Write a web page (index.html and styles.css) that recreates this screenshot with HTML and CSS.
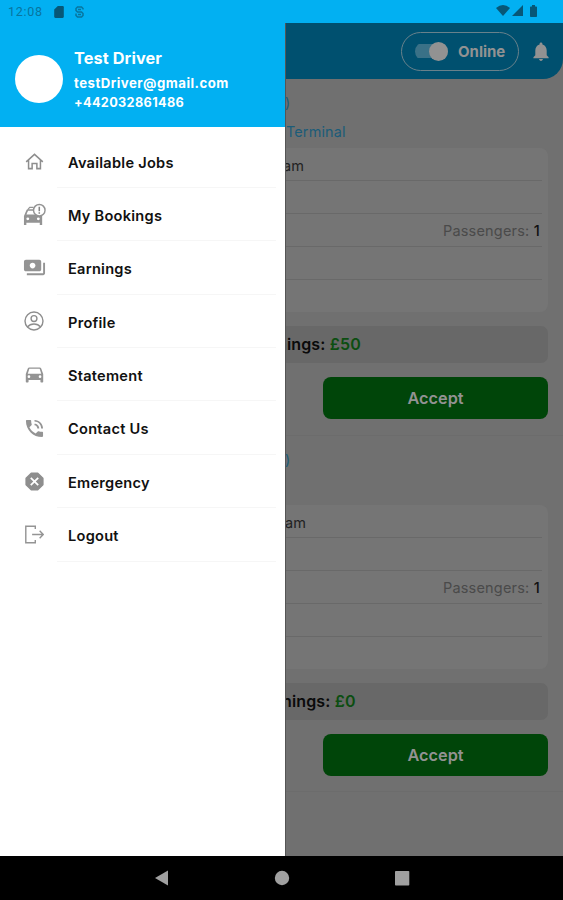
FILE: index.html
```html
<!DOCTYPE html>
<html lang="en">
<head>
<meta charset="utf-8">
<title>Driver menu</title>
<link rel="stylesheet" href="styles.css">
</head>
<body>
<div class="screen">
  <div class="status">
    <span class="time">12:08</span>
    <svg class="sd" viewBox="4 2 16 20"><path fill="#075777" d="M18 2h-8L4 8v12c0 1.100.9 2 2 2h12c1.100 0 2-.9 2-2V4c0-1.100-.9-2-2-2z"/></svg>
    <svg class="sync" viewBox="0 0 9 12" fill="none" stroke="#08759f" stroke-width="1.500"><path d="M8 3.500V2.500L6.500 1h-4L1 2.500v2L2.500 6h4L8 7.500v2L6.500 11h-4L1 9.500V7.500M3 3.500h3M3 8.500h3"/></svg>
    <span class="fill"></span>
    <svg class="wifi" viewBox="0 0 14 11"><path fill="#075777" d="M0 3Q7-3 14 3L7 11z"/></svg>
    <svg class="signal" viewBox="0 0 11 11"><path fill="#075777" d="M11 0v11H0z"/></svg>
    <svg class="battery" viewBox="0 0 7 12"><path fill="#075777" d="M2 0h3v1.500h1.200q.8 0 .8.800v8.900q0 .8-.8.800H.8q-.8 0-.8-.8V2.300q0-.8.800-.8H2z"/></svg>
  </div>
  <div class="main">
    <aside class="drawer">
      <header class="profile">
        <div class="avatar"></div>
        <div class="who">
          <div class="name">Test Driver</div>
          <div class="mail">testDriver@gmail.com</div>
          <div class="phone">+442032861486</div>
        </div>
      </header>
      <nav class="menu">
        <div class="item"><svg class="ic" viewBox="0 0 24 24" fill="none" stroke="#8e8e8e" stroke-width="1.900"><path d="M1.500 12.500L12 3l10.500 9.500M4.500 10v11H9v-6.500h6V21h4.500V10"/></svg><span class="label">Available Jobs</span></div>
        <div class="item"><svg class="ic big" viewBox="0 0 24 24"><path fill="#949494" fill-rule="evenodd" d="M1 13.500L3.300 8Q3.800 6.500 5.300 6.500H11V8H5.300L3.600 12H13q2 1.500 5 1.200h2V23h-2.500v-2.500h-14V23H1zM5 15a1.500 1.500 0 100 3 1.500 1.500 0 000-3zm11 0a1.500 1.500 0 100 3 1.500 1.500 0 000-3z"/><path fill="none" stroke="#949494" stroke-width="1.200" d="M5 7l2-2.500h4"/><path fill="#fff" d="M5.500 8.500H10l2 3H4.300z"/><circle cx="17" cy="7.500" r="6" fill="#fff" stroke="#949494" stroke-width="1.500"/><path stroke="#858585" stroke-width="1.600" d="M17 4v4.500M17 9.700v1.500"/></svg><span class="label">My Bookings</span></div>
        <div class="item"><svg class="ic big" viewBox="0 0 24 24"><path fill="#949494" d="M19 14V6c0-1.100-.9-2-2-2H3c-1.100 0-2 .9-2 2v8c0 1.100.9 2 2 2h14c1.100 0 2-.9 2-2zm-9-1c-1.660 0-3-1.340-3-3s1.340-3 3-3 3 1.340 3 3-1.340 3-3 3zm13-6v11c0 1.100-.9 2-2 2H4v-2h17V7h2z"/></svg><span class="label">Earnings</span></div>
        <div class="item"><svg class="ic round" viewBox="0 0 24 24" fill="none" stroke="#8e8e8e" stroke-width="1.700"><circle cx="12" cy="12" r="10.800"/><circle cx="12" cy="9" r="3.500"/><path d="M4 19.300Q7 15.500 12 15.500T20 19.300"/></svg><span class="label">Profile</span></div>
        <div class="item"><svg class="ic" viewBox="0 0 24 24"><path fill="#949494" fill-rule="evenodd" d="M20.500 4.500Q20 3 18.500 3h-13Q4 3 3.500 4.500L1 11.500V21q0 1 1 1h1.500q1 0 1-1v-2h15v2q0 1 1 1H22q1 0 1-1v-9.500zM5.500 4.600h13l2 6.400h-17zM5 13a1.700 1.700 0 110 3.400A1.700 1.700 0 015 13zm14 0a1.700 1.700 0 110 3.400 1.700 1.700 0 010-3.400z"/></svg><span class="label">Statement</span></div>
        <div class="item"><svg class="ic" viewBox="2 2 20 20"><path fill="#949494" d="M20 15.500c-1.250 0-2.450-.2-3.570-.57-.35-.11-.74-.03-1.020.24l-2.200 2.200c-2.830-1.440-5.150-3.750-6.590-6.590l2.200-2.200c.28-.28.36-.67.25-1.020C8.700 6.450 8.500 5.250 8.500 4c0-.55-.45-1-1-1H4c-.55 0-1 .45-1 1 0 9.390 7.610 17 17 17 .55 0 1-.45 1-1v-3.500c0-.55-.45-1-1-1zM19 12h2c0-4.970-4.030-9-9-9v1.500c4.140 0 7 3.400 7 7.500zm-4 0h2c0-2.760-2.240-5-5-5v1.500c1.660 0 3 1.840 3 3.500z"/></svg><span class="label">Contact Us</span></div>
        <div class="item"><svg class="ic" viewBox="0 0 24 24"><path fill="#8e8e8e" stroke="#8e8e8e" stroke-linejoin="round" stroke-width="2" d="M8 1.500h8L22.500 8v8L16 22.500H8L1.500 16V8z"/><path stroke="#fff" stroke-width="2.200" d="M7.300 7.300l9.400 9.400M16.700 7.300l-9.400 9.400"/></svg><span class="label">Emergency</span></div>
        <div class="item"><svg class="ic" viewBox="0 0 24 24" fill="none" stroke="#949494" stroke-width="1.800"><path d="M13 5V1.500H1v21h12V19M9 12h14M18.500 7.300L23 12l-4.500 4.700"/></svg><span class="label">Logout</span></div>
      </nav>
    </aside>
    <section class="page">
      <div class="topbar">
        <div class="online"><span class="track"><span class="knob"></span></span><span>Online</span></div>
        <svg class="bell" viewBox="4 2 16 20"><path fill="#929292" d="M12 22c1.100 0 2-.9 2-2h-4c0 1.100.89 2 2 2zm6-6v-5c0-3.070-1.640-5.640-4.500-6.320V4c0-.83-.67-1.500-1.500-1.500s-1.500.67-1.500 1.500v.68C7.630 5.360 6 7.920 6 11v5l-2 2v1h16v-1l-2-2z"/></svg>
      </div>
      <article class="job">
        <div class="route"><div class="paren">)</div><div class="term">Terminal</div></div>
        <div class="card">
          <div class="row"><span class="am">am</span></div>
          <div class="row"></div>
          <div class="row pax">Passengers: <b>1</b></div>
          <div class="row"></div>
          <div class="row"></div>
        </div>
        <div class="earn"><span class="sum">nings: <b>£50</b></span></div>
        <div class="accept">Accept</div>
      </article>
      <article class="job">
        <div class="route"><div class="paren">)</div></div>
        <div class="card">
          <div class="row"><span class="am second">am</span></div>
          <div class="row"></div>
          <div class="row pax">Passengers: <b>1</b></div>
          <div class="row"></div>
          <div class="row"></div>
        </div>
        <div class="earn"><span class="sum second">nings: <b>£0</b></span></div>
        <div class="accept">Accept</div>
      </article>
    </section>
  </div>
  <div class="navbar">
    <svg viewBox="0 0 16 16"><path fill="#a0a0a0" d="M1 8L14 .5v15z"/></svg>
    <svg viewBox="0 0 16 16"><circle cx="8" cy="8" r="7.200" fill="#a0a0a0"/></svg>
    <svg viewBox="0 0 16 16"><rect x="1" y="1" width="14.300" height="14.500" rx=".8" fill="#a0a0a0"/></svg>
  </div>
</div>
</body>
</html>
```
FILE: styles.css
```css
* { box-sizing: border-box; }
body { margin: 0; font-family: Inter, "Liberation Sans", sans-serif; }
svg { display: block; flex: none; }
.screen { width: 563px; height: 900px; display: flex; flex-direction: column; overflow: hidden; background: #000; }

.status { height: 23px; flex: none; display: flex; align-items: center; padding: 0 26px 0 8px; background: #02b0f2; }
.time { width: 46px; font: 12.5px/23px Roboto, sans-serif; letter-spacing: .7px; color: #08759f; }
.sd { width: 10px; height: 12px; }
.sync { width: 9px; height: 12px; margin-left: 11px; }
.fill { flex: 1; }
.wifi { width: 14px; height: 11px; }
.signal { width: 11px; height: 11px; margin-left: 2px; }
.battery { width: 7px; height: 12px; margin-left: 7px; }
.wifi, .signal, .battery { margin-top: -2px; }

.main { height: 833px; flex: none; display: flex; }
.drawer { width: 285px; flex: none; background: #fff; }
.profile { height: 104px; display: flex; padding: 0 15px; background: #02b0f2; color: #fff; font-weight: 700; }
.avatar { width: 48px; height: 48px; margin-top: 32px; border-radius: 50%; background: #fff; }
.who { margin: 24px 0 0 11px; white-space: nowrap; }
.name { font-size: 16.3px; line-height: 22px; font-weight: 700; letter-spacing: .1px; }
.mail { font-size: 13.2px; line-height: 19px; margin-top: 5px; letter-spacing: .48px; }
.phone { font-size: 12.7px; line-height: 20px; letter-spacing: .35px; }
.menu { padding-top: 7.500px; }
.item { height: 53.400px; display: grid; grid-template-columns: 57px 1fr; align-items: center; padding-right: 9px; }
.ic { width: 19px; height: 19px; margin: 0 0 0 24.500px; }
.ic.round { width: 20px; height: 20px; margin-left: 24px; }
.ic.big { width: 23px; height: 23px; margin-left: 22.500px; }
.label { height: 53.400px; border-bottom: 1px solid #f6f6f6; padding-left: 11px; font-size: 14.600px; line-height: 57px; font-weight: 600; letter-spacing: .25px; color: #111; }

.page { flex: 1; min-width: 0; overflow: hidden; background: #707070; border-left: 1px solid #555; }
.topbar { height: 56px; display: flex; align-items: center; justify-content: flex-end; padding-right: 14px; background: #00506f; border-bottom-right-radius: 20px; }
.online { width: 118px; height: 39px; border: 1.500px solid #68818b; border-radius: 20px; display: flex; align-items: center; padding-left: 13px; font-size: 15px; font-weight: 700; color: #929292; }
.track { width: 33px; height: 19px; display: flex; align-items: center; justify-content: flex-end; margin-right: 10px; background: linear-gradient(#3a7187, #3a7187) center / 100% 14px no-repeat; border-radius: 10px; }
.knob { width: 19px; height: 19px; border-radius: 50%; background: #929292; }
.bell { width: 16px; height: 19px; margin-left: 14px; }

.job { height: 356.500px; padding: 0 15px 0 0; border-bottom: 1px solid #6c6c6c; }
.route { height: 69px; padding-top: 14px; font-size: 14.400px; line-height: 20px; color: #1b5c79; }
.paren { margin-left: -1px; }
.term { margin-top: 9px; letter-spacing: .15px; }
.card { height: 164px; padding: 0 6px 0 0; background: #757575; border-radius: 0 8px 8px 0; }
.row { height: 33px; border-bottom: 1px solid #696969; font-size: 14.500px; line-height: 35px; color: #222; }
.row:last-child { border: 0; height: 32px; }
.am { margin-left: -3px; }
.am.second { margin-left: -1px; }
.pax { text-align: right; color: #4a4a4a; padding-right: 2px; letter-spacing: .2px; line-height: 34px; }
.pax b { font-weight: 500; color: #111; }
.earn { height: 37px; margin-top: 14px; background: #686868; border-radius: 0 7px 7px 0; font-size: 16px; line-height: 37px; font-weight: 600; color: #0a0a0a; }
.sum { margin-left: -9px; letter-spacing: .15px; }
.sum.second { margin-left: -4px; }
.earn b { font-weight: 600; color: #0c4e11; }
.accept { width: 225px; height: 42px; margin: 14px 0 0 auto; background: #004509; border-radius: 8px; text-align: center; font-size: 16.300px; line-height: 42px; font-weight: 600; color: #929292; }

.navbar { height: 44px; flex: none; display: flex; justify-content: center; gap: 104px; align-items: center; background: #000; }
.navbar svg { width: 16px; height: 16px; }
```
